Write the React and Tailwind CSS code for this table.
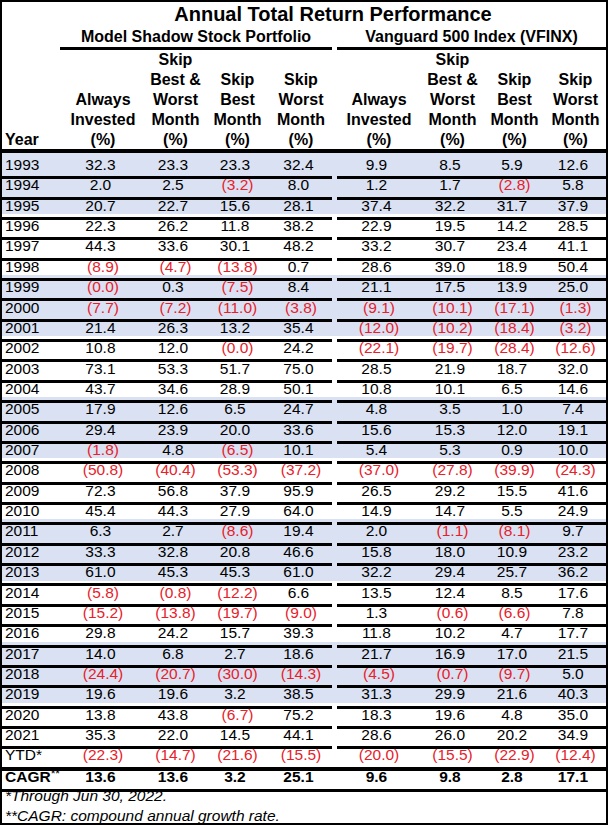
import React from "react";

const COLS =
  "grid grid-cols-[58px_86px_59px_65px_62px_5px_84px_63px_61px_61px]";

const DATA = [
  ["1993", "32.3", "23.3", "23.3", "32.4", "9.9", "8.5", "5.9", "12.6"],
  ["1994", "2.0", "2.5", "(3.2)", "8.0", "1.2", "1.7", "(2.8)", "5.8"],
  ["1995", "20.7", "22.7", "15.6", "28.1", "37.4", "32.2", "31.7", "37.9"],
  ["1996", "22.3", "26.2", "11.8", "38.2", "22.9", "19.5", "14.2", "28.5"],
  ["1997", "44.3", "33.6", "30.1", "48.2", "33.2", "30.7", "23.4", "41.1"],
  ["1998", "(8.9)", "(4.7)", "(13.8)", "0.7", "28.6", "39.0", "18.9", "50.4"],
  ["1999", "(0.0)", "0.3", "(7.5)", "8.4", "21.1", "17.5", "13.9", "25.0"],
  ["2000", "(7.7)", "(7.2)", "(11.0)", "(3.8)", "(9.1)", "(10.1)", "(17.1)", "(1.3)"],
  ["2001", "21.4", "26.3", "13.2", "35.4", "(12.0)", "(10.2)", "(18.4)", "(3.2)"],
  ["2002", "10.8", "12.0", "(0.0)", "24.2", "(22.1)", "(19.7)", "(28.4)", "(12.6)"],
  ["2003", "73.1", "53.3", "51.7", "75.0", "28.5", "21.9", "18.7", "32.0"],
  ["2004", "43.7", "34.6", "28.9", "50.1", "10.8", "10.1", "6.5", "14.6"],
  ["2005", "17.9", "12.6", "6.5", "24.7", "4.8", "3.5", "1.0", "7.4"],
  ["2006", "29.4", "23.9", "20.0", "33.6", "15.6", "15.3", "12.0", "19.1"],
  ["2007", "(1.8)", "4.8", "(6.5)", "10.1", "5.4", "5.3", "0.9", "10.0"],
  ["2008", "(50.8)", "(40.4)", "(53.3)", "(37.2)", "(37.0)", "(27.8)", "(39.9)", "(24.3)"],
  ["2009", "72.3", "56.8", "37.9", "95.9", "26.5", "29.2", "15.5", "41.6"],
  ["2010", "45.4", "44.3", "27.9", "64.0", "14.9", "14.7", "5.5", "24.9"],
  ["2011", "6.3", "2.7", "(8.6)", "19.4", "2.0", "(1.1)", "(8.1)", "9.7"],
  ["2012", "33.3", "32.8", "20.8", "46.6", "15.8", "18.0", "10.9", "23.2"],
  ["2013", "61.0", "45.3", "45.3", "61.0", "32.2", "29.4", "25.7", "36.2"],
  ["2014", "(5.8)", "(0.8)", "(12.2)", "6.6", "13.5", "12.4", "8.5", "17.6"],
  ["2015", "(15.2)", "(13.8)", "(19.7)", "(9.0)", "1.3", "(0.6)", "(6.6)", "7.8"],
  ["2016", "29.8", "24.2", "15.7", "39.3", "11.8", "10.2", "4.7", "17.7"],
  ["2017", "14.0", "6.8", "2.7", "18.6", "21.7", "16.9", "17.0", "21.5"],
  ["2018", "(24.4)", "(20.7)", "(30.0)", "(14.3)", "(4.5)", "(0.7)", "(9.7)", "5.0"],
  ["2019", "19.6", "19.6", "3.2", "38.5", "31.3", "29.9", "21.6", "40.3"],
  ["2020", "13.8", "43.8", "(6.7)", "75.2", "18.3", "19.6", "4.8", "35.0"],
  ["2021", "35.3", "22.0", "14.5", "44.1", "28.6", "26.0", "20.2", "34.9"],
];

const YTD = ["(22.3)", "(14.7)", "(21.6)", "(15.5)", "(20.0)", "(15.5)", "(22.9)", "(12.4)"];
const CAGR = ["13.6", "13.6", "3.2", "25.1", "9.6", "9.8", "2.8", "17.1"];

function Num({ v, border }) {
  const neg = v.startsWith("(");
  return (
    <div
      className={`flex items-center justify-center ${border} border-black ${
        neg ? "text-[#e8202a]" : ""
      }`}
    >
      {neg ? (
        v
      ) : (
        <span>
          {v}
          <span className="invisible">)</span>
        </span>
      )}
    </div>
  );
}

function Row({ label, values, shaded, border = "border-b-[3px]", gapBorder = false, h = "h-[20.37px]", bold = false, labelNode }) {
  return (
    <div
      className={`${COLS} ${h} ${shaded ? "bg-[#d9e1f2]" : "bg-white"} ${
        bold ? "font-bold" : ""
      }`}
    >
      <div className={`flex items-center pl-[3px] ${border} border-black`}>
        {labelNode || label}
      </div>
      {values.slice(0, 4).map((v, i) => (
        <Num key={i} v={v} border={border} />
      ))}
      <div className={gapBorder ? `${border} border-black` : ""} />
      {values.slice(4).map((v, i) => (
        <Num key={i + 4} v={v} border={border} />
      ))}
    </div>
  );
}

function Head({ lines }) {
  return (
    <div className="flex flex-col items-center justify-end text-center">
      {lines.map((l, i) => (
        <div key={i} className="whitespace-nowrap">
          {l}
        </div>
      ))}
    </div>
  );
}

export default function App() {
  return (
    <div
      className="w-[608px] border-2 border-black bg-white text-black text-[15.5px]"
      style={{ fontFamily: '"Liberation Sans", Arial, sans-serif' }}
    >
      {/* Title */}
      <div className={`${COLS} h-[25px]`}>
        <div />
        <div className="col-span-9 flex items-center justify-center text-[20px] font-bold leading-[25px] whitespace-nowrap">
          Annual Total Return Performance
        </div>
      </div>
      {/* Subtitles */}
      <div className={`${COLS} h-[23px] text-[16px] font-bold leading-[20px]`}>
        <div />
        <div className="col-span-4 flex items-center justify-center border-b-[3px] border-black whitespace-nowrap">
          Model Shadow Stock Portfolio
        </div>
        <div />
        <div className="col-span-4 flex items-center justify-center border-b-[3px] border-black whitespace-nowrap">
          Vanguard 500 Index (VFINX)
        </div>
      </div>
      {/* Column headers */}
      <div className={`${COLS} h-[103px] border-b-4 border-black text-[16px] font-bold leading-[20px]`}>
        <div className="flex items-end pl-[3px]">Year</div>
        <Head lines={["Always", "Invested", "(%)"]} />
        <Head lines={["Skip", "Best &", "Worst", "Month", "(%)"]} />
        <Head lines={["Skip", "Best", "Month", "(%)"]} />
        <Head lines={["Skip", "Worst", "Month", "(%)"]} />
        <div />
        <Head lines={["Always", "Invested", "(%)"]} />
        <Head lines={["Skip", "Best &", "Worst", "Month", "(%)"]} />
        <Head lines={["Skip", "Best", "Month", "(%)"]} />
        <Head lines={["Skip", "Worst", "Month", "(%)"]} />
      </div>
      {/* Data rows */}
      {DATA.map((r, i) => (
        <Row
          key={r[0]}
          label={r[0]}
          values={r.slice(1)}
          shaded={Math.floor(i / 3) % 2 === 0}
        />
      ))}
      <Row label="YTD*" values={YTD} h="h-[22px]" border="border-b-4" gapBorder />
      <Row
        values={CAGR}
        h="h-[20px]"
        border="border-b-[3px]"
        gapBorder
        bold
        labelNode={
          <span>
            CAGR
            <span className="relative -top-[4px] text-[12px] font-normal">**</span>
          </span>
        }
      />
      {/* Footnotes */}
      <div className="h-[38px] pl-[3px] pt-px italic leading-[19.5px]">
        <div>*Through Jun 30, 2022.</div>
        <div>**CAGR: compound annual growth rate.</div>
      </div>
    </div>
  );
}
